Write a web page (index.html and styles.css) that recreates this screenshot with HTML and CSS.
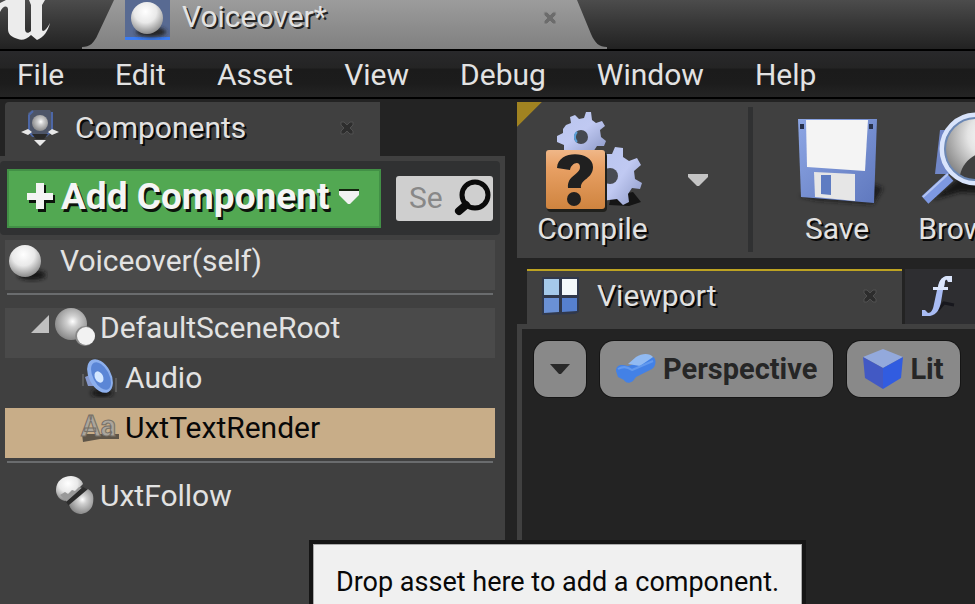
FILE: index.html
```html
<!DOCTYPE html>
<html lang="en">
<head>
<meta charset="utf-8">
<meta name="viewport" content="width=device-width, initial-scale=1">
<title>Voiceover</title>
<link rel="stylesheet" href="styles.css">
</head>
<body>
<svg class="defs" aria-hidden="true">
  <defs>
    <radialGradient id="ball" cx=".45" cy=".3" r=".7"><stop offset="0" stop-color="#fff"/><stop offset=".5" stop-color="#e9e9e9"/><stop offset="1" stop-color="#8c8c8c"/></radialGradient>
    <radialGradient id="dull" cx=".55" cy=".42" r=".6"><stop offset="0" stop-color="#fff"/><stop offset=".3" stop-color="#d0d0d0"/><stop offset="1" stop-color="#858585"/></radialGradient>
    <radialGradient id="lens" cx=".7" cy=".3" r=".8"><stop offset="0" stop-color="#fff"/><stop offset=".4" stop-color="#e4e4e4"/><stop offset="1" stop-color="#777"/></radialGradient>
    <linearGradient id="gear" x1="0" y1="0" x2="1" y2="1"><stop offset="0" stop-color="#b9c5ee"/><stop offset=".5" stop-color="#c0c9f2"/><stop offset="1" stop-color="#8c98c6"/></linearGradient>
    <linearGradient id="orange" x1="0" y1="0" x2="0" y2="1"><stop offset="0" stop-color="#f0b788"/><stop offset=".3" stop-color="#e8a064"/><stop offset="1" stop-color="#cf843f"/></linearGradient>
    <linearGradient id="disk" x1="0" y1="0" x2="1" y2="1"><stop offset="0" stop-color="#8da6e4"/><stop offset="1" stop-color="#5f78be"/></linearGradient>
    <filter id="soft" x="-30%" y="-30%" width="160%" height="160%"><feGaussianBlur stdDeviation="2"/></filter>
    <path id="cross" d="M2 2 5 2 8 5 11 2 14 2 14 5 11 8 14 11 14 14 11 14 8 11 5 14 2 14 2 11 5 8 2 5Z"/>
  </defs>
</svg>

<header class="titlebar">
  <svg class="brand" viewBox="0 0 60 49" role="img" aria-label="Unreal">
    <path d="M0 3 6 0H25V29C25 33 28 34 31 31V5L29 0H45L42 5V29C42 33 46 31 50 23C48 31 44 37 37 40L31 35C27 39 22 41 18 39C12 37 8 35 8 29V9C7 5 3 6 0 12Z" fill="#ececec"/>
  </svg>
  <div class="doc-tab">
    <svg class="tab-shape" viewBox="0 0 525 49" preserveAspectRatio="none" aria-hidden="true">
      <defs><linearGradient id="tabfill" x1="0" y1="0" x2="0" y2="1"><stop offset="0" stop-color="#9c9c9c"/><stop offset="1" stop-color="#808080"/></linearGradient></defs>
      <path d="M0 49V47C8 47 12 43 16 34L32 0H495L509 34C513 43 517 47 525 47V49Z" fill="url(#tabfill)"/>
    </svg>
    <svg class="thumb" viewBox="0 0 45 40" aria-hidden="true">
      <rect width="45" height="40" fill="#586a92"/><rect y="37" width="45" height="3" fill="#3c7df2"/>
      <ellipse cx="26" cy="32" rx="15" ry="5" fill="#202020" filter="url(#soft)"/>
      <circle cx="22" cy="18" r="16" fill="url(#ball)"/>
    </svg>
    <span class="doc-name">Voiceover*</span>
    <button class="close light" aria-label="Close Voiceover"><svg viewBox="0 0 16 16"><use href="#cross"/></svg></button>
  </div>
</header>

<nav class="menu">
  <a href="#">File</a><a href="#">Edit</a><a href="#">Asset</a><a href="#">View</a><a href="#">Debug</a><a href="#">Window</a><a href="#">Help</a>
</nav>

<main class="workspace">
  <section class="side">
    <div class="tab side-tab">
      <svg class="tab-icon" viewBox="0 0 40 40" aria-hidden="true">
        <path d="M8 5 12 2H30L32 6V24L27 29H12L8 24Z" fill="#4d5568"/><path d="M9 7V24L13 28H18M25 28 32 23V4M9 7 13 3" fill="none" stroke="#4d67a6" stroke-width="2"/>
        <circle cx="20" cy="15" r="8" fill="url(#dull)"/>
        <path d="M1 24 8 21 12 24 8 27ZM39 24 32 21 28 24 32 27ZM14 32H26L20 38Z" fill="#e8e8e8"/><path d="M12 26H28L24 31H16Z" fill="#292929"/>
      </svg>
      <h2>Components</h2>
      <button class="close" aria-label="Close Components"><svg viewBox="0 0 16 16"><use href="#cross"/></svg></button>
    </div>
    <div class="side-body">
      <div class="side-tools">
        <button class="add">
          <svg class="plus" viewBox="0 0 28 30" aria-hidden="true"><path d="M11 3h8v10h9v8H19v9H11V21H2V13h9Z" fill="#0c140c"/><path d="M9 1h8v10h9v7H17v9H9V18H0V11H9Z" fill="#f4f4f4"/></svg>
          <span>Add Component</span>
          <svg class="add-arrow" viewBox="0 0 20 16" aria-hidden="true"><path d="M0 0H20V4H0Z" fill="#14240f"/><path d="M0 2H20V6L11 15H9L0 6Z" fill="#f1f1f1"/></svg>
        </button>
        <label class="search">
          <input type="text" placeholder="Se" aria-label="Search">
          <svg viewBox="0 0 40 40" aria-hidden="true"><circle cx="22" cy="17" r="13" fill="none" stroke="#0a0a0a" stroke-width="5"/><path d="M13 27 6 33" stroke="#0a0a0a" stroke-width="8" stroke-linecap="round"/></svg>
        </label>
      </div>
      <ul class="tree">
        <li class="row shaded root">
          <svg class="root-ball" viewBox="0 0 40 40" aria-hidden="true"><ellipse cx="24" cy="32" rx="14" ry="5" fill="#191919" filter="url(#soft)"/><circle cx="17" cy="18" r="16" fill="url(#ball)"/></svg>
          <span>Voiceover(self)</span>
        </li>
        <li class="rule"></li>
        <li class="row shaded level1">
          <svg class="expander" viewBox="0 0 20 20" aria-hidden="true"><path d="M19 1V19H1Z" fill="#c0c0c0"/></svg>
          <svg class="icon" viewBox="0 0 40 40" aria-hidden="true"><circle cx="16" cy="16" r="16" fill="url(#dull)"/><circle cx="30" cy="28" r="10" fill="#8a8a8a"/><circle cx="31" cy="28" r="9" fill="#f2f2f2"/></svg>
          <span>DefaultSceneRoot</span>
        </li>
        <li class="row level2">
          <svg class="icon" viewBox="0 0 40 40" aria-hidden="true"><ellipse cx="22" cy="35" rx="11" ry="4" fill="#161616" filter="url(#soft)"/><path d="M3 16V28M36 20V34" stroke="#777" stroke-width="1"/><path d="M5 19 12 16 16 28 8 28Z" fill="#8699cd"/><ellipse cx="20" cy="18" rx="11" ry="18" transform="rotate(-28 20 18)" fill="#8db0ee"/><ellipse cx="21" cy="18" rx="8" ry="15" transform="rotate(-28 21 18)" fill="#5b86d6"/><ellipse cx="19" cy="19" rx="4" ry="6" transform="rotate(-28 19 19)" fill="#d4e7ff"/></svg>
          <span>Audio</span>
        </li>
        <li class="row level2 selected">
          <svg class="icon letters" viewBox="0 0 40 40" aria-hidden="true"><path d="M2 26H39V31H20L3 34Z" fill="#5e5548"/><text class="aa" x="1" y="28">Aa</text></svg>
          <span>UxtTextRender</span>
        </li>
        <li class="rule"></li>
        <li class="row level1">
          <span class="expander"></span>
          <svg class="icon" viewBox="0 0 40 40" aria-hidden="true"><path d="M1 14C1 5 8 0 16 0C22 0 27 4 28 8L22 14L17 19L10 25C5 24 1 20 1 14Z" fill="url(#ball)"/><path d="M5 19 10 16 13 18 17 14 20 15 24 11 27 12 12 26Z" fill="#999"/><path d="M11 26 28 11 33 14 15 31Z" fill="#2c2c2c"/><path d="M14 29 33 13C38 16 39 20 38 27C37 34 31 38 25 38C19 37 16 34 14 29Z" fill="url(#dull)"/></svg>
          <span>UxtFollow</span>
        </li>
      </ul>
    </div>
  </section>

  <section class="editor">
    <div class="toolbar">
      <button class="tool compile">
        <svg viewBox="-2 0 100 100" aria-hidden="true">
          <path d="M66 84 88 80 96 90 84 94 64 93Z" fill="#151515"/>
          <path d="M26 5 31 3 35 7 40 6 42 0 47 0 48 8 52 11 58 9 61 14 56 18 57 25 62 29 60 34 53 34 49 40H20L20 33 13 30 13 24 19 21 19 17 22 13 27 11Z" transform="translate(-1 0)" fill="url(#gear)"/><circle cx="36" cy="25" r="7" fill="#454950"/><path d="M32 20A7 7 0 0 0 32 30" stroke="#5a9fd8" stroke-width="2" fill="none"/>
          <path d="M59 42 67 42 70 35 78 36 78 45 84 49 92 46 96 53 89 59 90 67 97 71 95 77 87 76 83 82 84 90 78 93 72 87 56 89V42Z" fill="url(#gear)"/><circle cx="65" cy="64" r="8" fill="#484b52"/>
          <rect x="2" y="40" width="60" height="60" rx="4" fill="#20201c"/><rect x="1" y="38" width="59" height="59" rx="3" fill="url(#orange)"/>
          <path d="M12 56C13 37 48 39 48 55C48 67 35 67 36 76H23C22 63 35 63 35 55C35 48 26 51 25 58Z" fill="#202020"/><circle cx="29" cy="87" r="7" fill="#202020"/>
        </svg>
        <span>Compile</span>
      </button>
      <button class="compile-menu" aria-label="Compile options"><svg viewBox="0 0 20 12" aria-hidden="true"><path d="M0 0H20V3L11 12H9L0 3Z" fill="#c4c4c4"/></svg></button>
      <div class="divider"></div>
      <button class="tool save">
        <svg viewBox="0 0 100 100" aria-hidden="true">
          <path d="M12 84 84 72 96 76 86 92 30 88Z" fill="#1c1c1e" filter="url(#soft)"/>
          <path d="M11 7H90L87 91 14 85Z" fill="url(#disk)"/><path d="M19 8H81L78 59 20 55Z" fill="#f4f4f4"/><path d="M27 60 68 62V89L28 85Z" fill="#e6e6e6"/><path d="M34 63 44 63V83L34 82Z" fill="#5e7cc2"/><path d="M13 12H17V17H13ZM82 12H86V17H82Z" fill="#27314c"/>
        </svg>
        <span>Save</span>
      </button>
      <button class="tool browse">
        <svg viewBox="0 0 100 100" aria-hidden="true">
          <path d="M14 88 44 64 88 70 80 82 42 80Z" fill="#121212" filter="url(#soft)"/>
          <path d="M22 18 90 18 92 62 17 62Z" fill="#7187c8"/><path d="M32 65 7 88" stroke="#7d98e2" stroke-width="10"/><path d="M30 62 5 85" stroke="#b3c4f2" stroke-width="2"/>
          <circle cx="58" cy="37" r="34" fill="url(#lens)" stroke="#d9e4fc" stroke-width="5"/><path d="M42 63C46 45 63 36 90 38C86 62 60 76 42 63Z" fill="#404040"/><circle cx="58" cy="37" r="31" fill="none" stroke="#6c88b5" stroke-width="2"/>
        </svg>
        <span>Browse</span>
      </button>
    </div>

    <div class="view-tabs">
      <div class="tab view-tab">
        <svg class="tab-icon" viewBox="0 0 40 40" aria-hidden="true"><path d="M1 1H38V36L34 38 1 39Z" fill="#30384b"/><path d="M3 3H18V19H3Z" fill="#a5c9ea"/><path d="M21 3H36V19H21Z" fill="#f3f8fb"/><path d="M3 22H18V36L3 37Z" fill="#6a91d6"/><path d="M21 22H36V35L21 36Z" fill="#5680cf"/></svg>
        <h2>Viewport</h2>
        <button class="close" aria-label="Close Viewport"><svg viewBox="0 0 16 16"><use href="#cross"/></svg></button>
      </div>
      <button class="tab function-tab" aria-label="Construction Script">
        <svg class="tab-icon" viewBox="0 0 40 40" aria-hidden="true"><path d="M22 34 28 27 38 29" fill="none" stroke="#17171d" stroke-width="3"/><path d="M36 0H31C25 1 23 6 22 11H17V14H21L18 28C17 34 15 37 12 37L9 34H6V40H14C21 39 24 32 25 26L27 14H32V11H28L29 5C30 3 31 3 32 6H36Z" fill="#a9bcf4"/><path d="M36 0H31C25 1 23 6 22 11H17V14H32V11H28L29 5C30 3 31 3 32 6H36Z" fill="#dbe5fb"/></svg>
      </button>
    </div>
    <div class="viewport">
      <div class="view-controls">
        <button class="pill options" aria-label="Viewport options"><svg viewBox="0 0 20 12" aria-hidden="true"><path d="M0 1H20L11 11H9Z" fill="#292929"/></svg></button>
        <button class="pill"><svg class="pill-icon" viewBox="0 0 40 40" aria-hidden="true"><path d="M0 22C0 16 5 15 12 17L28 12 37 8C41 10 40 18 36 20L20 28 17 32C12 36 8 32 8 31L2 28Z" fill="#4381e6"/><path d="M12 15 20 8C26 4 34 4 37 8L24 17Z" fill="#91baf2"/><path d="M2 20C7 17 12 18 16 21L37 12" fill="none" stroke="#6299ee" stroke-width="2"/></svg><span>Perspective</span></button>
        <button class="pill"><svg class="pill-icon" viewBox="0 0 40 40" aria-hidden="true"><path d="M20 0 40 8 20 19 0 8Z" fill="#93a9dc"/><path d="M0 8 20 19V40L2 29Z" fill="#4259c4"/><path d="M40 8 20 19V40L38 29Z" fill="#315ce0"/></svg><span>Lit</span></button>
      </div>
    </div>
  </section>
</main>

<div class="tooltip" role="tooltip">Drop asset here to add a component.</div>
</body>
</html>
```

FILE: styles.css
```css
* { box-sizing: border-box; }

html, body { height: 100%; }

body {
  margin: 0;
  display: flex;
  flex-direction: column;
  overflow: hidden;
  background: #232323;
  color: #e2e2e2;
  font: 30px/40px Roboto, "Liberation Sans", sans-serif;
}

svg { display: block; flex: none; }
.defs { position: absolute; width: 0; height: 0; }
h2 { margin: 0; font-size: 30px; font-weight: 400; }
button { margin: 0; padding: 0; border: 0; background: none; color: inherit; font: inherit; }
a { color: inherit; text-decoration: none; }

/* Title bar */
.titlebar {
  display: flex;
  flex: none;
  height: 49px;
  background: linear-gradient(#4c4c4c, #383838 45%, #222);
}
.brand { width: 60px; height: 49px; margin-right: 22px; }
.doc-tab {
  position: relative;
  display: flex;
  align-items: flex-start;
  flex: 0 1 525px;
  padding: 0 49px 0 43px;
}
.tab-shape { position: absolute; inset: 0; width: 100%; height: 100%; }
.thumb { position: relative; width: 45px; height: 40px; }
.doc-name {
  position: relative;
  flex: 1;
  margin: -3px 0 0 12px;
  text-shadow: 2px 2px 0 #222;
}

.close { position: relative; width: 16px; height: 16px; }
.close svg { width: 16px; height: 16px; fill: #2d2d2d; stroke: #505050; stroke-width: 1px; }
.doc-tab .close { margin-top: 10px; }
.close.light svg { fill: #6c6c6c; stroke: #8f8f8f; }

/* Menu */
.menu {
  display: flex;
  flex: none;
  gap: 51px;
  height: 50px;
  padding: 4px 0 0 17px;
  border-top: 2px solid #000;
  border-bottom: 2px solid #000;
  background: linear-gradient(#29292b, #242424 36%, #1b1b1b 40%, #1c1c1c 70%, #242424);
}

.workspace {
  display: grid;
  grid-template-columns: minmax(0, 505fr) minmax(0, 458fr);
  gap: 12px;
  flex: 1;
  min-height: 0;
  padding-top: 3px;
}

.tab {
  display: flex;
  align-items: center;
  height: 54px;
  background: #404040;
}
.tab-icon { width: 40px; height: 40px; }
.tab h2 { flex: 1; text-shadow: 2px 2px 0 #080808; }

/* Components panel */
.side { display: flex; flex-direction: column; }
.side-tab { flex: none; width: 375px; margin-left: 5px; padding: 0 25px 2px 15px; border-top-left-radius: 4px; }
.side-tab h2 { margin-left: 15px; }
.side-body { flex: 1; padding: 5px 5px 0 0; background: #404040; }
.side-tools {
  display: flex;
  align-items: center;
  gap: 15px;
  height: 74px;
  padding: 0 7px;
  background: #303132;
  border-radius: 4px;
}
.add {
  display: flex;
  align-items: center;
  flex: 1;
  height: 59px;
  padding: 0 20px 2px 18px;
  border: 2px solid #429046;
  background: #52a852;
  color: #f5f5f5;
  font-size: 37px;
  font-weight: 700;
  white-space: nowrap;
  text-shadow: 2px 3px 0 #0c140c;
}
.plus { width: 28px; height: 30px; }
.add span { flex: 1; margin-left: 6px; text-align: left; }
.add-arrow { width: 20px; height: 16px; }
.search {
  display: flex;
  align-items: center;
  flex: 0 0 97px;
  height: 45px;
  padding-left: 13px;
  border-radius: 3px;
  background: #cfcfcf;
}
.search input {
  flex: 1;
  width: 0;
  min-width: 0;
  padding: 0;
  border: 0;
  background: none;
  font: 30px/40px Roboto, "Liberation Sans", sans-serif;
}
.search input::placeholder { color: #888; opacity: 1; }
.search svg { width: 40px; height: 40px; }

.tree { margin: 5px 5px 0; padding: 0; list-style: none; }
.row { display: flex; align-items: flex-start; height: 50px; }
.row span { white-space: nowrap; }
.shaded { background: #4a4a4a; }
.selected { background: #c8ad88; color: #080808; }
.root { padding-top: 1px; }
.root-ball { width: 40px; height: 40px; margin: 2px 12px 0 3px; }
.icon { width: 40px; height: 40px; margin-right: 5px; }
.level1 { padding-left: 25px; }
.level2 { padding-left: 75px; }
.expander { width: 20px; height: 20px; margin: 6px 5px 0 0; }
.rule {
  height: 2px;
  margin: 3px 2px 13px;
  background: #6a6c6e;
}
.aa {
  font: 700 29px Roboto, "Liberation Sans", sans-serif;
  fill: #aaa59c;
  stroke: #777067;
  stroke-width: 1px;
}

/* Editor toolbar */
.editor { display: flex; flex-direction: column; min-width: 0; }
.toolbar {
  display: flex;
  flex: none;
  height: 156px;
  padding: 5px 0 6px 20px;
  overflow: hidden;
  background: linear-gradient(135deg, #a18321 17px, #404040 18px);
}
.tool { display: flex; flex: none; flex-direction: column; align-items: center; padding-top: 5px; }
.tool svg { width: 100px; height: 100px; }
.tool span { margin-top: -3px; text-shadow: 2px 2px 0 #080808; }
.compile { width: 111px; }
.compile-menu { flex: none; width: 100px; }
.compile-menu svg { width: 20px; height: 12px; margin: 0 auto; }
.divider { flex: none; width: 5px; background: #303132; }
.save { width: 100px; margin-left: 34px; }
.browse { width: 110px; margin-left: 26px; }

/* Viewport */
.view-tabs { display: flex; flex: none; gap: 3px; margin-top: 11px; padding-left: 10px; overflow: hidden; }
.view-tab {
  flex: 0 0 375px;
  height: 55px;
  padding: 0 24px 4px 14px;
  border-top: 2px solid #bda322;
}
.view-tab h2 { margin-left: 16px; }
.function-tab { flex: 1 0 70px; height: 55px; padding: 0 0 1px 11px; background: #2e2e31; }
.viewport { flex: 1; border: solid #404040; border-width: 5px 0 0 5px; background: #232323; }
.view-controls { display: flex; gap: 14px; padding: 12px; }
.pill {
  display: flex;
  align-items: center;
  gap: 7px;
  height: 56px;
  padding: 0 16px;
  border-radius: 14px;
  background: #898989;
  box-shadow: 0 0 0 1px #151515;
  color: #262626;
  font-size: 29px;
  font-weight: 700;
}
.pill-icon { width: 40px; height: 40px; }
.options svg { width: 20px; height: 12px; }

.tooltip {
  position: absolute;
  top: 540px;
  left: 309px;
  height: 90px;
  padding: 18px 23px 0;
  border: 4px solid #151515;
  background: #f0f0f0;
  box-shadow: inset 0 0 0 1px #aaa;
  color: #080808;
  font-size: 27px;
  white-space: nowrap;
}
```
